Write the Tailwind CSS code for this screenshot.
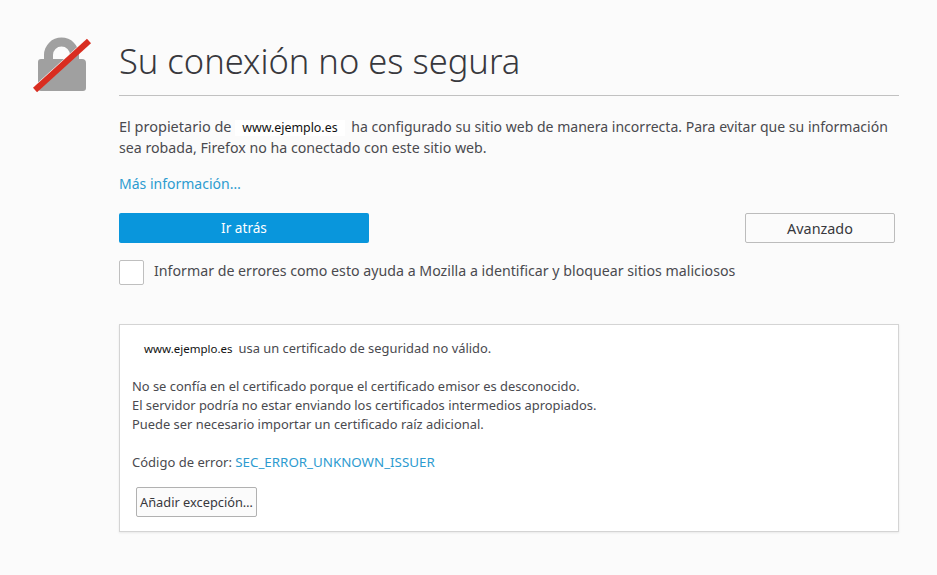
<!DOCTYPE html>
<html lang="es">
<head>
<meta charset="utf-8">
<title>Su conexión no es segura</title>
<script src="https://cdn.jsdelivr.net/npm/@tailwindcss/browser@4"></script>
</head>
<body class="bg-[#fbfbfb] h-[575px] w-[937px] overflow-hidden font-['Noto_Sans',sans-serif] text-[#4a4a4f]">
<div class="flex pt-[36px]">
  <div class="w-[119px] shrink-0 pl-[33px] pt-[1px]">
    <svg class="w-[60px] h-[60px]" viewBox="0 0 60 60">
      <path d="M5 25a3 3 0 0 1 3-3h3v-4a17 17 0 0 1 35 0v4h3a4 4 0 0 1 4 4v25a3 3 0 0 1-3 3H8a3 3 0 0 1-3-3z M20 22h17v-4a8.500 8.500 0 0 0-17 0z" fill="#a0a0a0" fill-rule="evenodd"/>
      <path d="M1 51 L54 3" stroke="#fbfbfb" stroke-width="3"/>
      <path d="M2 53 L56 4" stroke="#d92d20" stroke-width="6"/>
    </svg>
  </div>
  <main class="w-[780px]">
    <h1 class="text-[34.5px] leading-[50px] font-light text-[#38383d] pb-[9px] border-b border-[#c1c1c1]">Su conexión no es segura</h1>
    <p class="mt-[21px] text-[14.2px] leading-[20px]"><span class="text-[14.5px] leading-none">El propietario de</span> <span class="inline-block bg-white mr-[3px] px-[7px] text-[12.4px] leading-[16px] text-[#111]">www.ejemplo.es</span> <span class="text-[14.05px] leading-none">ha configurado su sitio web de manera incorrecta. Para evitar que su información</span><span class="block pt-[1px]">sea robada, Firefox no ha conectado con este sitio web.</span></p>
    <a class="block mt-[16px] text-[14px] leading-[20px] text-[#2d9bd0]">Más información…</a>
    <div class="mt-[19px] flex justify-between pr-[4px]">
      <button class="w-[250px] h-[30px] rounded-[2px] bg-[#0996dc] text-white text-[13.6px] pt-[1px]">Ir atrás</button>
      <button class="w-[150px] h-[30px] rounded-[2px] border border-[#bcbcbc] text-[14.4px] text-[#38383d] pt-[1px]">Avanzado</button>
    </div>
    <div class="mt-[17px] flex items-start gap-[10px]">
      <span class="w-[25px] h-[25px] rounded-[2px] border border-[#bfbfbf] bg-white"></span>
      <span class="text-[14.2px] leading-[20px] pt-[1px]">Informar de errores como esto ayuda a Mozilla a identificar y bloquear sitios maliciosos</span>
    </div>
    <section class="mt-[39px] h-[208px] bg-white border border-[#d4d4d4] shadow-[0_1px_2px_rgba(0,0,0,0.08)] pl-[12px] pt-[14px] text-[12.9px] leading-[19px]">
      <p><span class="text-[11.5px] text-[#111] pl-[12px] pr-[6px]">www.ejemplo.es</span>usa un certificado de seguridad no válido.</p>
      <p class="mt-[19px]">No se confía en el certificado porque el certificado emisor es desconocido.<br>El servidor podría no estar enviando los certificados intermedios apropiados.<br>Puede ser necesario importar un certificado raíz adicional.</p>
      <p class="mt-[19px]"><span class="text-[13px] leading-none">Código de error:</span> <a class="text-[13.35px] leading-none text-[#2d9bd0]">SEC_ERROR_UNKNOWN_ISSUER</a></p>
      <button class="mt-[15px] ml-[4px] w-[121px] h-[30px] rounded-[2px] border border-[#b1b1b1] bg-[#fbfbfb] text-[#38383d] text-[12.8px] pt-[1px]">Añadir excepción…</button>
    </section>
  </main>
</div>
</body>
</html>
